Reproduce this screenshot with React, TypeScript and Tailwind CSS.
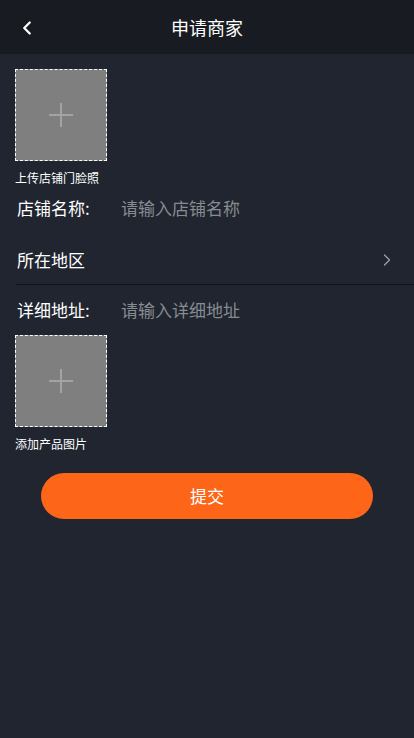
import { ChevronLeft, ChevronRight } from "lucide-react";

const font = { fontFamily: '"Noto Sans CJK SC", "Noto Sans", sans-serif' };

// dashed upload tile with a thin plus
const UploadBox = ({ label }: { label: string }) => (
  <div className="flex flex-col items-start">
    <div className="w-[92px] h-[92px] border border-dashed border-white bg-[#7f7f7f] flex items-center justify-center">
      <svg width="24" height="24" viewBox="0 0 24 24">
        <path d="M12 0v24M0 12h24" stroke="#a3a3a3" strokeWidth="2" />
      </svg>
    </div>
    <span className="mt-[9px] text-[12px] leading-[16px] text-white">{label}</span>
  </div>
);

const App = () => (
  <div className="min-h-[738px] bg-[#20252f] text-white" style={font}>
    {/* header */}
    <div className="h-[54px] bg-[#181b21] relative flex items-center justify-center">
      <ChevronLeft className="absolute left-[16px] top-[17px] w-[22px] h-[22px] text-white" strokeWidth={2.5} />
      <span className="text-[18px] leading-none">申请商家</span>
    </div>

    <div className="px-[15px] pt-[15px]">
      <UploadBox label="上传店铺门脸照" />
    </div>

    <div className="pl-[16px]">
      <div className="h-[44px] flex items-center pl-[1px] text-[17px]">
        <span className="w-[104px]">店铺名称:</span>
        <span className="text-[#878b92]">请输入店铺名称</span>
      </div>
      <div className="h-[55px] flex items-center justify-between pl-[1px] text-[17px] border-b border-[#0f1217]">
        <span className="mt-[6px]">所在地区</span>
        <ChevronRight className="mr-[17px] mt-[6px] w-[20px] h-[20px] text-[#9aa0a8]" strokeWidth={1.5} />
      </div>
      <div className="h-[50px] flex items-center pl-[1px] text-[17px]">
        <span className="w-[104px]">详细地址:</span>
        <span className="text-[#878b92]">请输入详细地址</span>
      </div>
    </div>

    <div className="px-[15px]">
      <UploadBox label="添加产品图片" />
    </div>

    <div className="px-[41px] pt-[21px]">
      <button className="w-full h-[46px] rounded-full bg-[#fd6618] text-white text-[17px]">提交</button>
    </div>
  </div>
);

export default App;
